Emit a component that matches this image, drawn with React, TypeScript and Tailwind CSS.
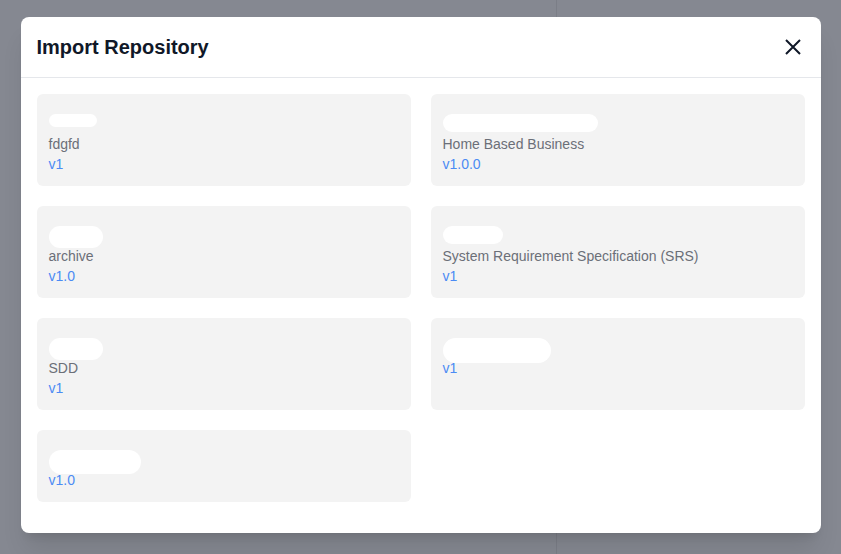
import React from "react";

type Repo = {
  blob: number[];
  description?: string;
  version: string;
};

const repos: Repo[] = [
  { blob: [48, 13], description: "fdgfd", version: "v1" },
  { blob: [155, 18], description: "Home Based Business", version: "v1.0.0" },
  { blob: [54, 22], description: "archive", version: "v1.0" },
  { blob: [60, 18], description: "System Requirement Specification (SRS)", version: "v1" },
  { blob: [54, 22], description: "SDD", version: "v1" },
  { blob: [108, 25], version: "v1" },
  { blob: [92, 24], version: "v1.0" },
];

function Blob({ w, h }: { w: number; h: number }) {
  return (
    <span className="relative block h-7">
      <span
        className="absolute left-0 top-[8px] rounded-full bg-white"
        style={{ width: w, height: h }}
      />
    </span>
  );
}

export default function App() {
  return (
    <div
      className="relative h-[554px] w-[841px] overflow-hidden bg-[#858891]"
      style={{ fontFamily: '"Liberation Sans", Arial, sans-serif' }}
    >
      <div className="absolute inset-y-0 left-[556px] w-px bg-[#7b7e87]" />
      <div className="relative flex justify-center pt-[17px]">
        <div className="w-[800px] rounded-lg bg-white shadow-xl">
          <div className="flex items-center justify-between border-b border-gray-200 px-4 py-4">
            <h2 className="text-xl font-bold leading-7 text-gray-900">Import Repository</h2>
            <button className="mr-[4px] text-gray-900">
              <svg width="16" height="16" viewBox="0 0 16 16" fill="none">
                <path d="M1 1L15 15M15 1L1 15" stroke="currentColor" strokeWidth="2" />
              </svg>
            </button>
          </div>
          <div className="grid grid-cols-2 gap-5 px-4 pt-4 pb-[31px]">
            {repos.map((r, i) => (
              <div key={i} className="rounded-md bg-[#f3f3f3] p-3">
                <Blob w={r.blob[0]} h={r.blob[1]} />
                {r.description && (
                  <p className="text-sm leading-5 text-[#6b6f78]">{r.description}</p>
                )}
                <p className="text-sm leading-5 text-[#4b8bf4]">{r.version}</p>
              </div>
            ))}
          </div>
        </div>
      </div>
    </div>
  );
}
